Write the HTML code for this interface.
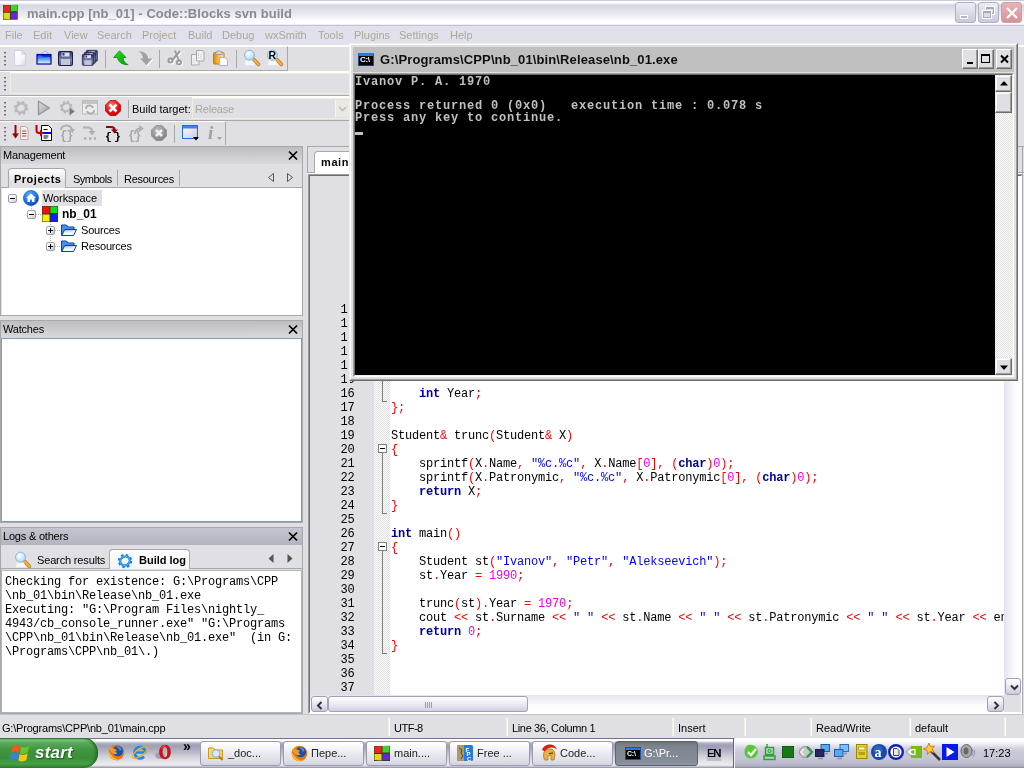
<!DOCTYPE html>
<html><head><meta charset="utf-8"><title>Code::Blocks</title>
<style>
html,body{margin:0;padding:0;background:#e0dfe3;}
body{width:1024px;height:768px;overflow:hidden;position:relative;font-family:"Liberation Sans",sans-serif;font-size:11px;color:#000;}
#app{will-change:transform;position:absolute;left:0;top:0;width:1024px;height:768px;overflow:hidden;background:#e0dfe3;}
.a{position:absolute;}
.t{position:absolute;white-space:pre;line-height:14px;height:14px;}
svg{position:absolute;overflow:visible;}
/* title bar */
#title{left:0;top:0;width:1024px;height:26px;background:linear-gradient(#c9c9d9 0,#c9c9d9 1px,#fff 1px,#fff 3px,#e6e6f0 4px,#d5d5e3 5px,#d7d7e5 6px,#e2e3ec 11px,#eeeff4 16px,#fbfbfc 20px,#fff 22px,#fff 24px,#eeeef5 24px,#eeeef5 25px,#c4c4d8 25px,#c4c4d8 26px);}
#menu{left:0;top:26px;width:1024px;height:19px;background:#e0e1eb;}
.mi{color:#aca899;top:28px;}
.tb{position:absolute;height:23px;background:#e0dfe3;border-top:1px solid #fff;border-bottom:1px solid #a8a7aa;}
.grip{position:absolute;left:4px;top:5px;width:3px;height:15px;background:repeating-linear-gradient(#6e6d74 0,#6e6d74 1px,#a9a8ae 1px,#a9a8ae 2px,#fff 2px,#fff 3px,transparent 3px,transparent 4px);clip-path:polygon(0 0,100% 0,100% 100%,0 100%)}.grip:after{content:"";position:absolute;left:2px;top:0;width:1px;height:15px;background:#e0dfe3}.grip:before{content:"";position:absolute;left:0;top:0;width:3px;height:15px;background:repeating-linear-gradient(transparent 0,transparent 2px,#e0dfe3 2px,#e0dfe3 4px)}
.sep{position:absolute;width:1px;background:#a8a7aa;}
/* aui panes */
.pane{position:absolute;border:1px solid #a8a7aa;background:#e0dfe3;box-sizing:border-box;}
.cap{position:absolute;left:0;top:0;right:0;height:17px;background:linear-gradient(#bebec1,#d9d8dc);}
.cap.act{background:linear-gradient(#c3c5cf,#b2b4bf);}
.cap .t{left:2px;top:1px;letter-spacing:-0.2px}
.mono{font-family:"Liberation Mono",monospace;}

.k{color:#0000a0;font-weight:bold}.o{color:#ff0000}.s{color:#0000ff}.n{color:#f000f0}
.ln{left:0;width:44.6px;text-align:right;}
.fl{width:1px;background:#808080}.fh{width:5px;height:1px;background:#808080}
.fb{width:9px;height:9px;box-sizing:border-box;border:1px solid #808080;background:#fff}
.fb:after{content:"";position:absolute;left:1px;top:3px;width:5px;height:1px;background:#000}
.sbb{width:17px;height:17px;box-sizing:border-box;border:1px solid #a0a0b8;border-radius:3px;background:linear-gradient(#fff,#e2e2ee 60%,#c8c8da);}

.ss{position:absolute;top:718px;width:1px;height:18px;background:#f1efe2;border-right:1px solid #fff}
.cbt{position:absolute;top:5px;width:16px;height:20px;box-sizing:border-box;background:#e0dfe3;border:1px solid;border-color:#fff #716f64 #716f64 #fff;box-shadow:inset -1px -1px 0 #9d9da1}
.csb{position:absolute;width:17px;height:17px;box-sizing:border-box;background:#e0dfe3;border:1px solid;border-color:#f1efe2 #716f64 #716f64 #f1efe2;box-shadow:inset -1px -1px 0 #9d9da1,inset 1px 1px 0 #fff}
.c{left:0;line-height:12px;height:12px}

.tk{position:absolute;top:741px;width:81px;height:25px;box-sizing:border-box;border:1px solid #9a9ab0;border-radius:3px;background:linear-gradient(#fff 0,#fcfcfe 3px,#e8e8f0 12px,#dcdce6 20px,#cfcfdc 24px);}
.tk .t{left:27px;top:4px;color:#222;font-size:11px}
.tk.on{background:linear-gradient(#6c727e 0,#7c8490 4px,#868e9a 20px,#949ca8 24px);border-color:#5c6270}
.tk.on .t{color:#fff;left:28px}

.xp{position:absolute;width:9px;height:9px;box-sizing:border-box;border:1px solid #9c9cac;border-radius:2px;background:linear-gradient(135deg,#fff 30%,#c8c8d4)}
.xp:before{content:"";position:absolute;left:1px;top:3px;width:5px;height:1px;background:#000}
.xp.pl:after{content:"";position:absolute;left:3px;top:1px;width:1px;height:5px;background:#000}
.dv{position:absolute;width:1px;background:repeating-linear-gradient(#b8b4a0 0,#b8b4a0 1px,transparent 1px,transparent 2px)}
.dh{position:absolute;height:1px;background:repeating-linear-gradient(90deg,#b8b4a0 0,#b8b4a0 1px,transparent 1px,transparent 2px)}

.wb{position:absolute;top:2px;width:21px;height:21px;box-sizing:border-box;border:1px solid #b0b0c4;border-radius:3px;background:linear-gradient(#ececf4,#dcdce8 50%,#c8c8d8);}
</style></head><body><div id="app">

<!-- ===== main window title ===== -->
<div id="title" class="a"></div>
<div class="t" id="ttl" style="left:27px;top:6px;font-size:13px;letter-spacing:0.05px;line-height:16px;height:16px;font-weight:bold;color:#8a8a8e;">main.cpp [nb_01] - Code::Blocks svn build</div>

<!-- ===== menu ===== -->
<div id="menu" class="a"></div>
<div class="t mi" style="left:5px">File</div>
<div class="t mi" style="left:33px">Edit</div>
<div class="t mi" style="left:64px">View</div>
<div class="t mi" style="left:97px">Search</div>
<div class="t mi" style="left:142px">Project</div>
<div class="t mi" style="left:188px">Build</div>
<div class="t mi" style="left:222px">Debug</div>
<div class="t mi" style="left:265px">wxSmith</div>
<div class="t mi" style="left:318px">Tools</div>
<div class="t mi" style="left:354px">Plugins</div>
<div class="t mi" style="left:399px">Settings</div>
<div class="t mi" style="left:450px">Help</div>

<!-- ===== toolbars ===== -->
<div class="a" style="left:0;top:45px;width:1024px;height:2px;background:#fff"></div>
<div class="tb" id="tb1" style="left:0;top:46px;width:287px;border-right:1px solid #a8a7aa"><div class="grip"></div></div>
<div class="tb" id="tb2" style="left:0;top:71px;width:1024px;"><div class="grip"></div></div>
<div class="tb" id="tb3" style="left:0;top:96px;width:1024px;"><div class="grip"></div></div>
<div class="tb" id="tb4" style="left:0;top:121px;width:225px;border-right:1px solid #a8a7aa"><div class="grip"></div></div>


<!-- ===== Management pane ===== -->
<div class="a" style="left:0;top:145px;width:304px;height:2px;background:#e0dfe3"></div>
<div class="pane" id="mgmt" style="left:0;top:146px;width:303px;height:170px;">
  <div class="cap"><div class="t">Management</div>
    <svg style="left:287px;top:4px" width="10" height="9" viewBox="0 0 10 9"><path d="M1 0.5L9 8.5M9 0.5L1 8.5" stroke="#000" stroke-width="1.7" fill="none"/></svg></div>
  <div class="a" style="left:0;top:17px;right:0;height:23px;background:#e0dfe3;border-bottom:1px solid #a8a7aa"></div>
  <div class="a" style="left:7px;top:21px;width:58px;height:20px;box-sizing:border-box;border:1px solid #a8a7aa;border-bottom:none;border-radius:4px 4px 0 0;background:linear-gradient(#fff,#e0dfe3 70%)"></div>
  <div class="t" style="left:13px;top:25px;font-weight:bold;letter-spacing:0.5px">Projects</div>
  <div class="t" style="left:72px;top:25px;letter-spacing:-0.5px">Symbols</div>
  <div class="sep" style="left:116px;top:23px;height:16px"></div>
  <div class="t" style="left:123px;top:25px;letter-spacing:-0.3px">Resources</div>
  <div class="sep" style="left:178px;top:23px;height:16px"></div>
  <svg style="left:267px;top:26px" width="26" height="10" viewBox="0 0 26 10"><path d="M5.5 0.5L0.5 4.5L5.5 8.5Z M19.5 0.5L24.5 4.5L19.5 8.5Z" stroke="#555" stroke-width="1" fill="none"/></svg>
  <div class="a" id="tree" style="left:1px;top:41px;width:300px;height:127px;background:#fff;"></div>
</div>

<!-- ===== Watches pane ===== -->
<div class="pane" id="watch" style="left:0;top:320px;width:303px;height:203px;">
  <div class="cap"><div class="t">Watches</div>
    <svg style="left:287px;top:4px" width="10" height="9" viewBox="0 0 10 9"><path d="M1 0.5L9 8.5M9 0.5L1 8.5" stroke="#000" stroke-width="1.7" fill="none"/></svg></div>
  <div class="a" style="left:0;top:17px;width:299px;height:182px;background:#fff;border:1px solid #7f9db9"></div>
</div>

<!-- ===== Logs pane ===== -->
<div class="pane" id="logs" style="left:0;top:527px;width:303px;height:187px;">
  <div class="cap act"><div class="t">Logs &amp; others</div>
    <svg style="left:287px;top:4px" width="10" height="9" viewBox="0 0 10 9"><path d="M1 0.5L9 8.5M9 0.5L1 8.5" stroke="#000" stroke-width="1.7" fill="none"/></svg></div>
  <div class="a" style="left:0;top:17px;right:0;height:23px;background:#e0dfe3;border-bottom:1px solid #a8a7aa"></div>
  <div class="t" style="left:36px;top:25px;letter-spacing:-0.15px">Search results</div>
  <div class="a" style="left:108px;top:21px;width:81px;height:20px;box-sizing:border-box;border:1px solid #a8a7aa;border-bottom:none;border-radius:4px 4px 0 0;background:linear-gradient(#fff,#f4f4f6)"></div>
  <div class="t" style="left:138px;top:25px;font-weight:bold;">Build log</div>
  <svg style="left:267px;top:26px" width="26" height="10" viewBox="0 0 26 10"><path d="M5.5 0L0.5 4.5L5.5 9Z M19.5 0L24.5 4.5L19.5 9Z" fill="#555"/></svg>
  <div class="a mono" id="logtxt" style="left:0px;top:42px;width:301px;height:143px;box-sizing:border-box;border:1px solid #a9b7c6;background:#fff;font-size:12px;letter-spacing:-0.2px;">
<div class="t" style="left:3px;top:4px">Checking for existence: G:\Programs\CPP</div>
<div class="t" style="left:3px;top:18px">\nb_01\bin\Release\nb_01.exe</div>
<div class="t" style="left:3px;top:32px">Executing: "G:\Program Files\nightly_</div>
<div class="t" style="left:3px;top:46px">4943/cb_console_runner.exe" "G:\Programs</div>
<div class="t" style="left:3px;top:60px">\CPP\nb_01\bin\Release\nb_01.exe"  (in G:</div>
<div class="t" style="left:3px;top:74px">\Programs\CPP\nb_01\.)</div>
  </div>
</div>

<svg width="0" height="0" style="left:0;top:0"><defs>
<linearGradient id="gpage" x1="0" y1="0" x2="1" y2="1"><stop offset="0" stop-color="#fff"/><stop offset=".6" stop-color="#f6f6fb"/><stop offset="1" stop-color="#d8d8ea"/></linearGradient>
<linearGradient id="gfold" x1="0" y1="0" x2="0" y2="1"><stop offset="0" stop-color="#1038c8"/><stop offset=".5" stop-color="#58a8f8"/><stop offset="1" stop-color="#fff"/></linearGradient>
<linearGradient id="gsave" x1="0" y1="0" x2="0" y2="1"><stop offset="0" stop-color="#2c3464"/><stop offset=".6" stop-color="#7c84a8"/><stop offset="1" stop-color="#50587c"/></linearGradient>
<linearGradient id="gclip" x1="0" y1="0" x2="1" y2="0"><stop offset="0" stop-color="#e08808"/><stop offset=".5" stop-color="#f8c040"/><stop offset="1" stop-color="#fff0a0"/></linearGradient>
<radialGradient id="glens" cx=".4" cy=".35" r=".7"><stop offset="0" stop-color="#fff"/><stop offset="1" stop-color="#a8d4f0"/></radialGradient>
<linearGradient id="ggray" x1="0" y1="0" x2="1" y2="1"><stop offset="0" stop-color="#e0e0e0"/><stop offset="1" stop-color="#9c9c9c"/></linearGradient>
<radialGradient id="gred" cx=".4" cy=".3" r=".8"><stop offset="0" stop-color="#ff7070"/><stop offset=".6" stop-color="#e81010"/><stop offset="1" stop-color="#b00000"/></radialGradient>
<radialGradient id="ggry2" cx=".4" cy=".3" r=".8"><stop offset="0" stop-color="#b8b8b8"/><stop offset="1" stop-color="#7c7c7c"/></radialGradient>
<linearGradient id="ggreen" x1="0" y1="0" x2="1" y2="1"><stop offset="0" stop-color="#30e030"/><stop offset="1" stop-color="#00a000"/></linearGradient>
<linearGradient id="gwin" x1="0" y1="0" x2="1" y2="1"><stop offset="0" stop-color="#fff"/><stop offset="1" stop-color="#c8c8e0"/></linearGradient>
<radialGradient id="gsph" cx=".4" cy=".3" r=".8"><stop offset="0" stop-color="#60b0ff"/><stop offset=".7" stop-color="#1060e0"/><stop offset="1" stop-color="#0838a0"/></radialGradient>
<g id="isave"><rect x=".5" y=".5" width="14" height="14" rx="1" fill="url(#gsave)" stroke="#181c48"/><rect x="3" y="8" width="9" height="6" fill="#c4c4da"/><rect x="3.5" y="1.5" width="8" height="4" fill="#dcdcec"/><rect x="4.5" y="2" width="2" height="2.5" fill="#30386c"/></g>
<g id="ifind"><path d="M1.500 10h8.500l1 5.500h-10.500z" fill="#f6f6fb" stroke="#dedeea" stroke-width=".6"/><path d="M10 9.500l4.500 5" stroke="#b87818" stroke-width="3.400" stroke-linecap="round"/><path d="M10 9.500l4.500 5" stroke="#f8b040" stroke-width="2" stroke-linecap="round"/><circle cx="5.500" cy="5.200" r="5" fill="url(#glens)" stroke="#88b8dc"/></g>
<g id="igear"><ellipse cx="8" cy="8" rx="4.900" ry="4.300" transform="rotate(-30 8 8)" fill="none" stroke-width="2.300"/><circle cx="8" cy="8" r="6.200" fill="none" stroke-width="1.900" stroke-dasharray="2.500 2.370"/></g>
<path id="ioct" d="M5 .5h6l4.5 4.5v6l-4.5 4.5h-6l-4.5-4.5v-6z"/>
<g id="ifold"><path d="M.5 11.500v-10.500h5l1.500 2h6v3" fill="#4890f0" stroke="#1038c0"/><path d="M.7 11.500l3-6h11.800l-3 6z" fill="url(#gfold2)" stroke="#1038c0"/></g>
<linearGradient id="gfold2" x1="0" y1="0" x2=".3" y2="1"><stop offset="0" stop-color="#78b8ff"/><stop offset=".55" stop-color="#e8f2ff"/><stop offset="1" stop-color="#fff"/></linearGradient>

<g id="iff"><circle cx="8.500" cy="8.500" r="7.800" fill="#e87810"/><path d="M.8 7q-.5 5 3.500 8 4 2.500 8.500.8-4.500 0-7.500-2.500-3-3-4.500-6.300z" fill="#f8b830"/><circle cx="9.800" cy="7" r="5.300" fill="#1c50b0"/><path d="M8 2.500q3-1 5 1.500 1 2-1 3-1-2.500-4-4.500z" fill="#58a0e8" opacity=".8"/><path d="M1.200 4q2.300-1.200 4.300.3l3.500 1.700-1.700 1.500 2.200 2.300q-3.500 1.200-5.700-1-2-2.300-2.600-4.800z" fill="#f89820"/></g>
<g id="icb"><rect x="0" y="1" width="16" height="15" fill="#403828"/><path d="M.5 1.500l7-.5v7h-7z" fill="#e82818"/><path d="M8.500 1l7-.5v7h-7z" fill="#40d030"/><path d="M.5 9h7v6.500l-7-.5z" fill="#e0d818"/><path d="M8.500 9h7v6l-7 .5z" fill="#6028d8"/></g>
<g id="icmd"><rect x=".5" y=".5" width="15" height="12" fill="#000" stroke="#1c4fa8"/><rect x="1" y="1" width="14" height="2" fill="#2a7be0"/></g>
</defs></svg>

<!-- toolbar 1 icons -->
<svg style="left:12px;top:50px" width="16" height="16"><path d="M2.5 .5h7.5l3.5 3.5v11.5h-11z" fill="url(#gpage)" stroke="#d0d0e0"/><path d="M10 .5v3.5h3.5z" fill="#ececf6" stroke="#c0c0d4" stroke-width=".8"/></svg>
<svg style="left:36px;top:50px" width="16" height="16"><path d="M5 4l4-3 2.5 1.5 1 2" fill="#e8f0ff" stroke="#78a0e8" stroke-width=".8"/><rect x="1" y="4.5" width="14" height="9.5" fill="url(#gfold)" stroke="#0000b0" stroke-width="1.2"/><path d="M1 4.5h5l1 1.5h8" fill="none" stroke="#0000b0" stroke-width="1.2"/></svg>
<svg style="left:58px;top:51px" width="16" height="16"><use href="#isave"/></svg>
<svg style="left:82px;top:50px" width="18" height="17"><g transform="translate(4,0) scale(.78)"><use href="#isave"/></g><g transform="translate(2,2) scale(.78)"><use href="#isave"/></g><g transform="translate(0,4) scale(.78)"><use href="#isave"/></g></svg>
<div class="sep" style="left:105px;top:50px;height:18px"></div>
<svg style="left:113px;top:50px" width="16" height="16"><path d="M6.5 .8L.6 7.5h4c.3 4 4 7.2 10.6 7.2-3.200-1.200-5-3.500-5.200-7.200h3z" fill="url(#ggreen)" stroke="#009000" stroke-width=".8"/></svg>
<svg style="left:137px;top:50px" width="17" height="17"><g transform="translate(1,1) rotate(180 8 8)"><path d="M6.500 .8L.6 7.500h4c.3 4 4 7.200 10.600 7.200-3.200-1.200-5-3.500-5.200-7.200h3z" fill="#fff"/></g><g transform="rotate(180 8 8)"><path d="M6.500 .8L.6 7.500h4c.3 4 4 7.200 10.600 7.200-3.200-1.200-5-3.500-5.200-7.200h3z" fill="#a2a2a2"/></g></svg>
<div class="sep" style="left:159px;top:50px;height:18px"></div>
<svg style="left:167px;top:50px" width="17" height="17"><g transform="translate(1,1)" stroke="#fff" stroke-width="2" fill="none"><path d="M13 1L5.500 10M8 .5l4 10.500"/><circle cx="3.500" cy="10.500" r="2"/><circle cx="12" cy="12.500" r="2"/></g><g stroke="#9c9c9c" stroke-width="2" fill="none"><path d="M13 1L5.500 10M8 .5l4 10.500"/><circle cx="3.500" cy="10.500" r="2"/><circle cx="12" cy="12.500" r="2"/></g></svg>
<svg style="left:191px;top:50px" width="16" height="16"><path d="M.5 4.500h6l1.500 1.500v9h-7.500z" fill="#f0f0f0" stroke="#a8a8a8"/><path d="M5.500 .5h6l1.500 1.500v9h-7.500z" fill="#f0f0f0" stroke="#a8a8a8"/><path d="M7.500 3v6M10 4v5M3 8v5" stroke="#c4c4c4" stroke-dasharray="1 1"/></svg>
<svg style="left:213px;top:50px" width="16" height="16"><rect x=".5" y="2.500" width="10.500" height="11.500" rx="1" fill="url(#gclip)" stroke="#c87808"/><path d="M2.500 4.500a3.500 3.800 0 0 1 7 0z" fill="#d4d4dc" stroke="#9090a0" stroke-width=".8"/><path d="M6.500 7.500h5.500l2.500 2.500v5.500h-8z" fill="#fafaff" stroke="#b0b0cc"/></svg>
<div class="sep" style="left:236px;top:50px;height:18px"></div>
<svg style="left:244px;top:50px" width="16" height="16"><use href="#ifind"/></svg>
<svg style="left:267px;top:50px" width="16" height="16"><use href="#ifind"/><text x="1.500" y="9" font-family="Liberation Sans,sans-serif" font-size="10.500" font-weight="bold" fill="#000">R</text></svg>

<!-- toolbar 2 field -->
<div class="a" style="left:10px;top:73px;width:340px;height:21px;box-sizing:border-box;border:1px solid #efedde;border-right:none;box-shadow:0 -1px 0 #fff"></div>
<!-- toolbar 3 icons -->
<svg style="left:13px;top:100px" width="16" height="16"><g stroke="#b8b8b8"><use href="#igear"/></g></svg>
<svg style="left:37px;top:100px" width="16" height="16"><path d="M1.500 1.200L12.500 8L1.500 14.800z" fill="url(#ggray)" stroke="#949494" stroke-width="1.300" stroke-linejoin="round"/></svg>
<svg style="left:59px;top:100px" width="17" height="16"><g stroke="#b8b8b8" transform="scale(.9)"><use href="#igear"/></g><path d="M10.200 6.800l6 4.700-6 4.500z" fill="#787878" stroke="#e0dfe3" stroke-width=".7"/></svg>
<svg style="left:82px;top:100px" width="16" height="16"><rect x=".5" y=".5" width="15" height="13.500" fill="#ececec" stroke="#bcbcbc"/><rect x="1" y="1" width="14" height="3" fill="#c4c4c4"/><path d="M4 9a3.500 3 0 0 1 7-1M12 10a3.500 3 0 0 1-7 1" fill="none" stroke="#b0b0b0" stroke-width="2"/></svg>
<svg style="left:105px;top:100px" width="16" height="16"><use href="#ioct" fill="url(#gred)" stroke="#c80000" stroke-width=".8"/><path d="M4.500 4.500l7 7M11.500 4.500l-7 7" stroke="#fff" stroke-width="2.600"/></svg>
<div class="sep" style="left:128px;top:100px;height:18px"></div>
<div class="t" style="left:132px;top:102px">Build target:</div>
<div class="a" style="left:192px;top:98px;width:158px;height:21px;box-sizing:border-box;border:1px solid #efedde;border-right:none;box-shadow:0 -1px 0 #fff"></div>
<div class="t" style="left:195px;top:102px;color:#aca899;letter-spacing:-0.2px">Release</div>
<div class="a" style="left:335px;top:100px;width:15px;height:17px;background:#eae9e4;border-left:1px solid #f6f5ee"></div>
<svg style="left:338px;top:106px" width="9" height="6"><path d="M1 1l3.500 3.500L8 1" stroke="#c0bdb0" stroke-width="1.600" fill="none"/></svg>
<!-- toolbar 4 icons -->
<svg style="left:12px;top:125px" width="17" height="16"><path d="M3.500 0v11" stroke="#a00000" stroke-width="2"/><path d="M0 8.500l3.500 5 3.500-5z" fill="#a00000"/><path d="M8.500 1.500h5l2.500 2.500v10.500h-7.500z" fill="#f4f4f4" stroke="#c8a0a0"/><path d="M10 6h4.500M10 8.500h4.500M10 11h4.500" stroke="#e03030"/></svg>
<svg style="left:35px;top:125px" width="18" height="16"><path d="M6.500 .5h7l3 3v12h-10z" fill="#fff" stroke="#000"/><path d="M8.500 4.500h4M8.500 11h5M8.500 13h4" stroke="#000"/><path d="M8 8h9" stroke="#0000e0" stroke-width="2"/><path d="M1.500 0v5.500q0 2.500 3 2.500h2" fill="none" stroke="#c00000" stroke-width="2"/><path d="M5 4.500l3.500 3.500-3.500 3.500z" fill="#c00000"/></svg>
<svg style="left:59px;top:125px" width="17" height="16"><text x="1" y="14" font-family="Liberation Mono,monospace" font-size="12" font-weight="bold" fill="#a8a8a8" letter-spacing="-1">{}</text><path d="M2 5a5.500 4.500 0 0 1 11 0" fill="none" stroke="#b0b0b0" stroke-width="2"/><path d="M10.500 4h5.500l-2.500 4z" fill="#b0b0b0"/></svg>
<svg style="left:82px;top:125px" width="16" height="16"><path d="M1 2.500h5q4 0 4 4" fill="none" stroke="#b0b0b0" stroke-width="2"/><path d="M6.500 6h7l-3.500 4.500z" fill="#b0b0b0"/><path d="M2 13.500h12" stroke="#b0b0b0" stroke-width="2.500" stroke-dasharray="2.500 2.500"/></svg>
<svg style="left:105px;top:125px" width="17" height="16"><text x="0" y="14.500" font-family="Liberation Mono,monospace" font-size="11.500" font-weight="bold" fill="#000" letter-spacing="2">{}</text><path d="M1 2h5q3.500 0 3.500 3" fill="none" stroke="#900010" stroke-width="2.200"/><path d="M6 4.500h7l-3.500 4z" fill="#900010"/></svg>
<svg style="left:128px;top:125px" width="17" height="16"><text x="0" y="14" font-family="Liberation Mono,monospace" font-size="12" font-weight="bold" fill="#a8a8a8" letter-spacing="-1">{}</text><path d="M7 9q0-5 5-5.500" fill="none" stroke="#b0b0b0" stroke-width="2"/><path d="M11 0l5 3.500-5 3.500z" fill="#b0b0b0"/></svg>
<svg style="left:151px;top:125px" width="16" height="16"><use href="#ioct" fill="url(#ggry2)" stroke="#8c8c8c" stroke-width=".8"/><path d="M5 5l6 6M11 5l-6 6" stroke="#f0f0f0" stroke-width="2.600"/></svg>
<div class="sep" style="left:174px;top:125px;height:18px"></div>
<svg style="left:182px;top:125px" width="17" height="16"><rect x=".5" y=".5" width="15" height="13" fill="url(#gwin)" stroke="#2868e8"/><rect x="1" y="1" width="14" height="2.500" fill="#4080f0"/><path d="M11 12h6l-3 3.500z" fill="#000"/></svg>
<svg style="left:206px;top:125px" width="18" height="16"><text x="2" y="14" font-family="Liberation Serif,serif" font-size="19" font-weight="bold" font-style="italic" fill="#a0a0a0">i</text><path d="M11 12h5l-2.500 3z" fill="#a0a0a0"/></svg>

<!-- tree (abs coords) -->
<div class="a" style="left:42px;top:190px;width:60px;height:16px;background:#e0dfe3"></div>
<div class="dv" style="left:31px;top:206px;height:4px"></div>
<div class="dh" style="left:36px;top:214px;width:6px"></div><div class="dv" style="left:50px;top:222px;height:24px"></div>
<div class="dh" style="left:55px;top:230px;width:6px"></div><div class="dh" style="left:55px;top:246px;width:6px"></div>
<div class="xp" style="left:8px;top:194px"></div>
<div class="xp" style="left:27px;top:210px"></div>
<div class="xp pl" style="left:46px;top:226px"></div>
<div class="xp pl" style="left:46px;top:242px"></div>
<svg style="left:23px;top:190px" width="16" height="16"><circle cx="8" cy="8" r="7.600" fill="url(#gsph)" stroke="#0a48c0" stroke-width=".6"/><path d="M8 3.500L3 8h1.500v4h2.500v-2.500h2v2.500h2.500v-4H13z" fill="#fff"/></svg>
<svg style="left:42px;top:206px" width="16" height="16"><rect x="0" y="0" width="16" height="16" fill="#403020"/><rect x=".5" y=".5" width="7" height="7" fill="#f01010"/><rect x="8.500" y=".5" width="7" height="6.500" fill="#10e010"/><rect x=".5" y="8.500" width="7" height="7" fill="#f0f010"/><rect x="8.500" y="8" width="7" height="7.500" fill="#1020f0"/></svg>
<svg style="left:61px;top:224px" width="16" height="13"><use href="#ifold"/></svg>
<svg style="left:61px;top:240px" width="16" height="13"><use href="#ifold"/></svg>
<div class="t" style="left:43px;top:191px;letter-spacing:-0.100px">Workspace</div>
<div class="t" style="left:62px;top:207px;font-weight:bold;font-size:12px">nb_01</div>
<div class="t" style="left:81px;top:223px;letter-spacing:-0.200px">Sources</div>
<div class="t" style="left:81px;top:239px;letter-spacing:-0.200px">Resources</div>

<!-- title icon & buttons -->
<svg style="left:3px;top:4px" width="15" height="16"><g transform="scale(.92,.98)"><use href="#icb"/></g></svg>
<div class="wb" style="left:955px"><div class="a" style="left:4px;top:12px;width:8px;height:3px;background:#b8b8c8;border:1px solid #fff;box-sizing:border-box;height:4px"></div></div>
<div class="wb" style="left:978px"><div class="a" style="left:7px;top:4px;width:8px;height:7px;box-sizing:border-box;border:1px solid #a8a8bc;border-top-width:2px;box-shadow:0 0 0 1px #fff"></div><div class="a" style="left:4px;top:8px;width:8px;height:7px;box-sizing:border-box;border:1px solid #a8a8bc;border-top-width:2px;background:#dcdce8;box-shadow:0 0 0 1px #fff"></div></div>
<div class="wb" style="left:1001px;background:linear-gradient(#e8b4b4,#dca0a4 60%,#d49498);border-color:#d0a0a8"><svg style="left:4px;top:4px" width="12" height="12"><path d="M1 1l10 10M11 1L1 11" stroke="#fff" stroke-width="2.200"/></svg></div>
<!-- log tab icons -->
<svg style="left:15px;top:552px" width="16" height="16"><use href="#ifind"/></svg>
<svg style="left:117px;top:553px" width="16" height="16"><g stroke="#1080f0"><use href="#igear"/></g><ellipse cx="8" cy="8" rx="4.900" ry="4.300" transform="rotate(-30 8 8)" fill="none" stroke="#48a8ff" stroke-width="1.200"/></svg>
<!-- right strip next to console -->
<div class="a" style="left:1018px;top:47px;width:6px;height:99px;background:#e0dfe3"></div>
<!--PANES-->

<!-- ===== editor notebook ===== -->
<div class="a" style="left:307px;top:146px;width:717px;height:28px;background:#e0dfe3;border-top:1px solid #a8a7aa;border-left:1px solid #a8a7aa;box-sizing:border-box"></div>
<div class="a" style="left:307px;top:172px;width:717px;height:2px;background:#fff;border-top:1px solid #a8a7aa;box-sizing:content-box;height:1px"></div>
<div class="a" style="left:314px;top:151px;width:60px;height:22px;box-sizing:border-box;border:1px solid #a8a7aa;border-bottom:none;border-radius:4px 4px 0 0;background:#fff"></div>
<div class="t" style="left:321px;top:155px;font-weight:bold;letter-spacing:0.6px">main.cpp</div>
<div class="a" style="left:1022px;top:146px;width:1px;height:568px;background:#a8a7aa"></div><div class="a" id="edit" style="left:308px;top:174px;width:715px;height:540px;box-sizing:border-box;border:1px solid;border-color:#9d9da1 transparent #fff #9d9da1;background:#fff;background-clip:padding-box">
 <div class="a" style="left:0;top:0;width:713px;height:538px;box-sizing:border-box;border:1px solid;border-color:#716f64 #fff #fff #716f64;"></div>
 <div class="a" id="ec" style="left:1px;top:1px;width:711px;height:536px;overflow:hidden;">
  <div class="a" style="left:0;top:0;width:64px;height:519px;background:#e0dfe3"></div>
  <div class="a" style="left:64px;top:0;width:16px;height:519px;background:#efeff1;background-image:conic-gradient(#fff 25%,#e0dfe3 0 50%,#fff 0 75%,#e0dfe3 0);background-size:2px 2px"></div>
  <div class="a mono" id="code" style="left:0;top:0;width:694px;height:519px;font-size:12px;letter-spacing:-0.2px;overflow:hidden">
<div class="t ln" style="top:127px">10</div>
<div class="t ln" style="top:141px">11</div>
<div class="t ln" style="top:155px">12</div>
<div class="t ln" style="top:169px">13</div>
<div class="t ln" style="top:183px">14</div>
<div class="t ln" style="top:197px">15</div>
<div class="t ln" style="top:211px">16</div><div class="t" style="left:81px;top:211px">    <span class="k">int</span> Year<span class="o">;</span></div>
<div class="t ln" style="top:225px">17</div><div class="t" style="left:81px;top:225px"><span class="o">};</span></div>
<div class="t ln" style="top:239px">18</div>
<div class="t ln" style="top:253px">19</div><div class="t" style="left:81px;top:253px">Student<span class="o">&amp;</span> trunc<span class="o">(</span>Student<span class="o">&amp;</span> X<span class="o">)</span></div>
<div class="t ln" style="top:267px">20</div><div class="t" style="left:81px;top:267px"><span class="o">{</span></div>
<div class="t ln" style="top:281px">21</div><div class="t" style="left:81px;top:281px">    sprintf<span class="o">(</span>X<span class="o">.</span>Name<span class="o">,</span> <span class="s">"%c.%c"</span><span class="o">,</span> X<span class="o">.</span>Name<span class="o">[</span><span class="n">0</span><span class="o">],</span> <span class="o">(</span><span class="k">char</span><span class="o">)</span><span class="n">0</span><span class="o">);</span></div>
<div class="t ln" style="top:295px">22</div><div class="t" style="left:81px;top:295px">    sprintf<span class="o">(</span>X<span class="o">.</span>Patronymic<span class="o">,</span> <span class="s">"%c.%c"</span><span class="o">,</span> X<span class="o">.</span>Patronymic<span class="o">[</span><span class="n">0</span><span class="o">],</span> <span class="o">(</span><span class="k">char</span><span class="o">)</span><span class="n">0</span><span class="o">);</span></div>
<div class="t ln" style="top:309px">23</div><div class="t" style="left:81px;top:309px">    <span class="k">return</span> X<span class="o">;</span></div>
<div class="t ln" style="top:323px">24</div><div class="t" style="left:81px;top:323px"><span class="o">}</span></div>
<div class="t ln" style="top:337px">25</div>
<div class="t ln" style="top:351px">26</div><div class="t" style="left:81px;top:351px"><span class="k">int</span> main<span class="o">()</span></div>
<div class="t ln" style="top:365px">27</div><div class="t" style="left:81px;top:365px"><span class="o">{</span></div>
<div class="t ln" style="top:379px">28</div><div class="t" style="left:81px;top:379px">    Student st<span class="o">(</span><span class="s">"Ivanov"</span><span class="o">,</span> <span class="s">"Petr"</span><span class="o">,</span> <span class="s">"Alekseevich"</span><span class="o">);</span></div>
<div class="t ln" style="top:393px">29</div><div class="t" style="left:81px;top:393px">    st<span class="o">.</span>Year <span class="o">=</span> <span class="n">1990</span><span class="o">;</span></div>
<div class="t ln" style="top:407px">30</div>
<div class="t ln" style="top:421px">31</div><div class="t" style="left:81px;top:421px">    trunc<span class="o">(</span>st<span class="o">).</span>Year <span class="o">=</span> <span class="n">1970</span><span class="o">;</span></div>
<div class="t ln" style="top:435px">32</div><div class="t" style="left:81px;top:435px">    cout <span class="o">&lt;&lt;</span> st<span class="o">.</span>Surname <span class="o">&lt;&lt;</span> <span class="s">" "</span> <span class="o">&lt;&lt;</span> st<span class="o">.</span>Name <span class="o">&lt;&lt;</span> <span class="s">" "</span> <span class="o">&lt;&lt;</span> st<span class="o">.</span>Patronymic <span class="o">&lt;&lt;</span> <span class="s">" "</span> <span class="o">&lt;&lt;</span> st<span class="o">.</span>Year <span class="o">&lt;&lt;</span> endl<span class="o">;</span></div>
<div class="t ln" style="top:449px">33</div><div class="t" style="left:81px;top:449px">    <span class="k">return</span> <span class="n">0</span><span class="o">;</span></div>
<div class="t ln" style="top:463px">34</div><div class="t" style="left:81px;top:463px"><span class="o">}</span></div>
<div class="t ln" style="top:477px">35</div>
<div class="t ln" style="top:491px">36</div>
<div class="t ln" style="top:505px">37</div>
  </div>
  <!-- fold marks -->
  <div class="a fl" style="left:72px;top:196px;height:29px"></div><div class="a fh" style="left:72px;top:225px"></div>
  <div class="a fb" style="left:68px;top:268px"></div><div class="a fl" style="left:72px;top:277px;height:60px"></div><div class="a fh" style="left:72px;top:337px"></div>
  <div class="a fb" style="left:68px;top:366px"></div><div class="a fl" style="left:72px;top:375px;height:102px"></div><div class="a fh" style="left:72px;top:477px"></div>
  <!-- v scrollbar -->
  <div class="a" style="left:694px;top:0;width:17px;height:519px;background:linear-gradient(90deg,#e4e4ee,#fbfbfd 60%,#fff)"></div>
  <div class="a sbb" style="left:695px;top:502px;width:16px"><svg style="left:4px;top:5px" width="9" height="7" viewBox="0 0 9 7"><path d="M1 1.5L4.5 5L8 1.5" stroke="#333" stroke-width="2" fill="none"/></svg></div>
  <!-- h scrollbar -->
  <div class="a" style="left:0;top:519px;width:694px;height:17px;background:linear-gradient(#e4e4ee,#fbfbfd 60%,#fff)"></div>
  <div class="a sbb" style="left:1px;top:520px;height:16px"><svg style="left:4px;top:4px" width="7" height="9" viewBox="0 0 7 9"><path d="M5.5 1L2 4.5L5.5 8" stroke="#333" stroke-width="2" fill="none"/></svg></div>
  <div class="a sbb" style="left:677px;top:520px;height:16px"><svg style="left:5px;top:4px" width="7" height="9" viewBox="0 0 7 9"><path d="M1.5 1L5 4.5L1.5 8" stroke="#333" stroke-width="2" fill="none"/></svg></div>
  <div class="a sbb" style="left:18px;top:520px;height:16px;width:200px;background:linear-gradient(#fff,#e6e6f0 60%,#d0d0e0)"><div class="a" style="left:96px;top:5px;width:8px;height:6px;background:repeating-linear-gradient(90deg,#9a9ab0 0,#9a9ab0 1px,transparent 1px,transparent 2px)"></div></div>
  <div class="a" style="left:694px;top:519px;width:17px;height:17px;background:#e0dfe3"></div>
 </div>
</div>
<!--EDITOR-->

<!-- ===== status bar ===== -->
<div class="a" id="status" style="left:0;top:714px;width:1024px;height:24px;background:#e0dfe3;border-top:1px solid #c4c3c8;box-sizing:border-box"></div>
<div class="t" style="left:2px;top:721px;letter-spacing:-0.2px">G:\Programs\CPP\nb_01\main.cpp</div>
<div class="t" style="left:394px;top:721px;letter-spacing:-0.5px">UTF-8</div>
<div class="t" style="left:512px;top:721px;letter-spacing:-0.35px">Line 36, Column 1</div>
<div class="t" style="left:678px;top:721px">Insert</div>
<div class="t" style="left:816px;top:721px">Read/Write</div>
<div class="t" style="left:915px;top:721px">default</div>
<div class="ss" style="left:388px"></div><div class="ss" style="left:506px"></div><div class="ss" style="left:672px"></div><div class="ss" style="left:744px"></div><div class="ss" style="left:810px"></div><div class="ss" style="left:909px"></div><div class="ss" style="left:1004px"></div>
<!--STATUS-->

<div class="a" style="left:348px;top:300px;width:2px;height:84px;background:#e0dfe3"></div>
<!-- ===== console window ===== -->
<div class="a" id="con" style="left:349px;top:43px;width:669px;height:338px;box-sizing:border-box;background:#e0dfe3;border:1px solid;border-color:#f1efe2 #716f64 #716f64 #f1efe2;">
 <div class="a" style="left:0;top:0;width:667px;height:336px;box-sizing:border-box;border:1px solid;border-color:#fff #9d9da1 #9d9da1 #fff;"></div>
 <div class="a" id="ccap" style="left:3px;top:3px;width:661px;height:25px;background:#c0c0c0"></div>
 <!-- icon -->
 <div class="a" style="left:8px;top:9px;width:16px;height:13px;background:#000;box-sizing:border-box;border:1px solid #1c4fa8;border-top:3px solid #2a7be0;border-bottom-color:#163a80"></div>
 <div class="t" style="left:10px;top:10px;font-size:8px;line-height:11px;height:11px;font-weight:bold;color:#fff;letter-spacing:-0.3px">C:\</div>
 <div class="t" id="ctitle" style="left:30px;top:8px;font-size:13px;letter-spacing:0.12px;line-height:16px;height:16px;font-weight:bold;color:#0e1010">G:\Programs\CPP\nb_01\bin\Release\nb_01.exe</div>
 <!-- caption buttons -->
 <div class="cbt" style="left:612px"><div class="a" style="left:4px;top:12px;width:6px;height:2px;background:#000"></div></div>
 <div class="cbt" style="left:628px"><div class="a" style="left:2px;top:4px;width:9px;height:9px;box-sizing:border-box;border:1px solid #000;border-top-width:2px"></div></div>
 <div class="cbt" style="left:646px"><svg style="left:3px;top:5px" width="9" height="8" viewBox="0 0 9 8"><path d="M1 0.5L8 7.5M8 0.5L1 7.5" stroke="#000" stroke-width="2" fill="none"/></svg></div>
 <!-- client -->
 <div class="a" style="left:3px;top:29px;width:661px;height:304px;box-sizing:border-box;border:1px solid;border-color:#9d9da1 #fff #fff #9d9da1;">
  <div class="a" style="left:0;top:0;width:659px;height:302px;box-sizing:border-box;border:1px solid;border-color:#716f64 #f1efe2 #f1efe2 #716f64;"></div>
  <div class="a mono" id="cblk" style="left:1px;top:1px;width:640px;height:300px;background:#000;color:#c0c0c0;font-size:12px;font-weight:bold;letter-spacing:0.8px;overflow:hidden">
<div class="t c" style="top:1px">Ivanov P. A. 1970</div>
<div class="t c" style="top:25px">Process returned 0 (0x0)   execution time : 0.078 s</div>
<div class="t c" style="top:37px">Press any key to continue.</div>
<div class="a" style="left:0;top:57px;width:8px;height:3px;background:#c0c0c0"></div>
  </div>
  <div class="a" style="left:641px;top:1px;width:17px;height:300px;background-image:conic-gradient(#fff 25%,#e0dfe3 0 50%,#fff 0 75%,#e0dfe3 0);background-size:2px 2px"></div>
  <div class="csb" style="left:641px;top:1px"><svg style="left:4px;top:5px" width="8" height="5" viewBox="0 0 8 5"><path d="M0 4.5L3.5 0.5L4.5 0.5L8 4.5Z" fill="#000"/></svg></div>
  <div class="csb" style="left:641px;top:18px;height:21px"></div>
  <div class="csb" style="left:641px;top:284px"><svg style="left:4px;top:6px" width="8" height="5" viewBox="0 0 8 5"><path d="M0 0.5L3.5 4.5L4.5 4.5L8 0.5Z" fill="#000"/></svg></div>
 </div>
</div>
<!--CONSOLE-->

<!-- ===== taskbar ===== -->
<div class="a" id="task" style="left:0;top:738px;width:1024px;height:30px;background:linear-gradient(#72728e 0,#72728e 1px,#fff 1px,#fff 3px,#d4d4e2 4px,#b4b4ca 5px,#a0a0b8 7px,#a2a2b8 9px,#b4b4c4 13px,#cecfd6 18px,#e2e2e6 23px,#eeeeee 27px,#c4c4d0 28.500px,#8c8ca8 30px)"></div>
<div class="a" id="start" style="left:0;top:738px;width:98px;height:30px;border-radius:0 14px 14px 0/0 15px 15px 0;background:linear-gradient(#3c8c3c 0,#7cc47c 2px,#58a858 5px,#3f963f 12px,#3a903a 20px,#46a046 26px,#2c7a2c 30px);box-shadow:inset -3px 0 3px -1px #1f6a1f,inset 0 1px 0 #2f7f2f"></div>
<div class="t" style="left:35px;top:742px;font-size:17px;line-height:22px;height:22px;font-weight:bold;font-style:italic;color:#fff;text-shadow:1px 1px 1px #1c5c1c;letter-spacing:0.2px">start</div>
<div class="t" style="left:183px;top:739px;font-size:14px;font-weight:bold;color:#000">&raquo;</div>
<div class="tk" style="left:200px"><div class="t">_doc...</div></div>
<div class="tk" style="left:283px"><div class="t">Пере...</div></div>
<div class="tk" style="left:366px"><div class="t">main....</div></div>
<div class="tk" style="left:449px"><div class="t">Free ...</div></div>
<div class="tk" style="left:532px"><div class="t">Code...</div></div>
<div class="tk on" style="left:615px;width:83px"><div class="t">G:\Pr...</div></div>
<div class="a" style="left:707px;top:745px;width:14px;height:16px;background:rgba(150,156,190,.45)"></div>
<div class="t" style="left:707px;top:746px;color:#000;letter-spacing:-1.1px;text-shadow:0.3px 0 0 #000">EN</div>
<div class="a" id="tray" style="left:733px;top:738px;width:291px;height:30px;background:linear-gradient(#fff 0,#fff 3px,#eeeef4 6px,#d4d4e0 10px,#c8c8d8 14px,#c6c6d6 20px,#bcbccc 25px,#b0b0c4 28px,#8888a4 30px);box-shadow:inset 1px 0 0 #62627e,inset 2px 0 0 #f4f4f8"></div>
<div class="t" style="left:983px;top:746px;color:#000">17:23</div>

<!-- start flag -->
<svg style="left:11px;top:744px" width="19" height="18"><path d="M1.500 2.500q3.500-2.500 7.500-.5l-1.200 6.500q-4-2-7.500.5z" fill="#f05820"/><path d="M10 2.500q4 2 8-.5l-1.200 6.500q-4 2.500-8 .5z" fill="#70c030"/><path d="M.2 10q3.500-2.500 7.500-.5l-1.200 6.500q-4-2-7.500.5z" fill="#3880e8"/><path d="M8.600 10q4 2 8-.5l-1.200 6.500q-4 2.500-8 .5z" fill="#f8c818"/></svg>
<!-- quick launch -->
<svg style="left:108px;top:744px" width="17" height="17"><use href="#iff"/></svg>
<svg style="left:132px;top:744px" width="17" height="17"><path d="M13.500 8.500a5.500 5.500 0 1 0-1.500 4" fill="none" stroke="#2088e8" stroke-width="3"/><path d="M3.500 8.500h10" stroke="#2088e8" stroke-width="2.500"/><ellipse cx="8" cy="8.500" rx="9" ry="3.500" transform="rotate(-35 8 8.500)" fill="none" stroke="#f0b020" stroke-width="1.300"/></svg>
<svg style="left:155px;top:744px" width="17" height="17"><ellipse cx="5" cy="11.500" rx="5" ry="3.500" fill="#9090a0" opacity=".7"/><path d="M10 .8c-3.800 0-5.800 3.300-5.800 7.200s2 7.200 5.800 7.200 5.800-3.300 5.800-7.200-2-7.200-5.800-7.200zm0 2c1.600 0 2.400 2.300 2.400 5.200s-.8 5.200-2.400 5.200-2.400-2.300-2.400-5.200.8-5.200 2.400-5.200z" fill="#c81414" fill-rule="evenodd"/><path d="M6 4.500q1.500-2.500 4-2.800" stroke="#f07060" stroke-width="1" fill="none"/></svg>
<!-- task icons -->
<svg style="left:208px;top:745px" width="17" height="17"><path d="M.5 13.500v-10.500h5l1.500 2h7.500v8.500z" fill="#f8d868" stroke="#c89820"/><circle cx="8" cy="8.500" r="3.800" fill="#d8ecff" stroke="#88a8d0"/><path d="M11 11.500l3.500 3.500" stroke="#b87818" stroke-width="2"/></svg>
<svg style="left:291px;top:745px" width="17" height="17"><use href="#iff"/></svg>
<svg style="left:374px;top:745px" width="16" height="16"><use href="#icb"/></svg>
<svg style="left:457px;top:745px" width="16" height="16"><rect x="0" y="0" width="16" height="16" rx="1.500" fill="#2878e8"/><path d="M0 1.500q0-1.500 1.500-1.500h5.500v16h-5.500q-1.500 0-1.500-1.500z" fill="#b09868"/><path d="M2 3l3 2-1 3 2 3-2 3" stroke="#604820" fill="none"/><text x="8.500" y="6.500" font-family="Liberation Sans,sans-serif" font-size="6" font-weight="bold" fill="#fff">F</text><text x="9.500" y="11" font-family="Liberation Sans,sans-serif" font-size="6" font-weight="bold" fill="#fff">P</text><text x="10" y="15.500" font-family="Liberation Sans,sans-serif" font-size="6" font-weight="bold" fill="#fff">C</text></svg>
<svg style="left:540px;top:744px" width="18" height="18"><path d="M2 6q2-6 9-5.500 4 .5 6 5-3-2.500-6-2-4 .5-6 4z" fill="#d02018"/><path d="M4 8q3-4.500 8-3 3 1.500 3 6l-1 5h-3v-5l-3 1v4h-3.500q-2-4-.5-8z" fill="#e8b040" stroke="#a87010" stroke-width=".7"/><path d="M9 9.500l4-.5" stroke="#503008" stroke-width="1.200"/></svg>
<svg style="left:625px;top:747px" width="16" height="13"><use href="#icmd"/></svg>
<div class="t" style="left:627px;top:749px;font-size:7px;line-height:9px;height:9px;font-weight:bold;color:#fff;letter-spacing:-0.200px">C:\</div>
<!-- tray icons -->
<svg style="left:744px;top:744px" width="16" height="16"><path d="M3 1.500q5-2 9 1.500 3 3.500 1 8-2.500 4-7.500 3.500-4.500-1-5-6 0-4.500 2.500-7z" fill="#58c838"/><path d="M4 8l3 3 5-6" stroke="#fff" stroke-width="2.200" fill="none"/></svg>
<svg style="left:763px;top:744px" width="14" height="16"><path d="M4 0v3M2.500 3.500h8v7h-8zM1 12h11v3.500h-11zM6.500 10.500v1.500" stroke="#28a828" stroke-width="1.500" fill="none"/><circle cx="6.500" cy="7" r="1.500" fill="none" stroke="#28a828" stroke-width="1.200"/></svg>
<svg style="left:782px;top:746px" width="12" height="12"><rect width="12" height="12" fill="#043c04"/><path d="M2 0v12M4 0v12M6 0v12M8 0v12M10 0v12M0 2h12M0 4h12M0 6h12M0 8h12M0 10h12" stroke="#22a822" stroke-width=".7"/></svg>
<svg style="left:799px;top:745px" width="16" height="14"><ellipse cx="6.500" cy="7" rx="6" ry="5.500" fill="#c8c8c8" stroke="#909090"/><path d="M8 2l5 5-5 5" stroke="#289848" stroke-width="2.200" fill="none"/><path d="M5 4l-3 3 3 3" stroke="#f0f0f0" stroke-width="1.500" fill="none"/></svg>
<svg style="left:815px;top:744px" width="16" height="16"><rect x="6" y=".5" width="8.500" height="7" fill="#58a8f0" stroke="#2858b0"/><rect x=".5" y="5.500" width="8.500" height="7" fill="#282860" stroke="#181840"/><path d="M3 14.500h5M9 9.500h4" stroke="#8890b0" stroke-width="1.500"/></svg>
<svg style="left:834px;top:744px" width="16" height="16"><rect x="6" y=".5" width="8.500" height="7" fill="#78c0f8" stroke="#3868c0"/><rect x=".5" y="5.500" width="8.500" height="7" fill="#58a8f0" stroke="#2858b0"/><path d="M3 14.500h5M9 9.500h4" stroke="#8890b0" stroke-width="1.500"/></svg>
<svg style="left:856px;top:744px" width="12" height="15"><rect x=".5" y=".5" width="10.500" height="14" fill="#e8d028" stroke="#988808"/><rect x="2.500" y="3" width="6.500" height="3" fill="#fff8c0" stroke="#988808" stroke-width=".6"/><rect x="2.500" y="8" width="6.500" height="3" fill="#b8a010"/></svg>
<svg style="left:871px;top:744px" width="17" height="17"><circle cx="8" cy="8" r="8" fill="#1848a8"/><circle cx="7" cy="6" r="4.500" fill="#3870d0" opacity=".6"/><text x="3.500" y="13" font-family="Liberation Serif,serif" font-size="14" font-weight="bold" fill="#fff">a</text></svg>
<svg style="left:888px;top:744px" width="17" height="17"><circle cx="8" cy="8" r="6.800" fill="#fff" stroke="#1020c0" stroke-width="2.400"/><path d="M5.500 4.500h3.500l2 2v5h-5.500z" fill="#e8e8f0" stroke="#404050"/></svg>
<svg style="left:906px;top:745px" width="16" height="14"><path d="M0 7q4-6 9-4v8q-5 1-9-4z" fill="#d8d8d8" stroke="#808080" stroke-width=".6"/><rect x="5" y="1" width="11" height="12" fill="#78b818"/><path d="M3 7q3-3.500 6-2.500v5q-3 .5-6-2.500z" fill="none" stroke="#fff" stroke-width="1.200"/></svg>
<svg style="left:924px;top:743px" width="17" height="18"><path d="M6 7l10 10" stroke="#383838" stroke-width="2.500"/><path d="M5 0l1.500 3.500 4-.5-2.500 3 2 3.500-4-1-2.500 3-.5-4-3.500-1.500 3.500-1.500z" fill="#f8d028" stroke="#e06010" stroke-width=".8"/></svg>
<svg style="left:942px;top:744px" width="16" height="16"><rect width="16" height="16" fill="#0818e8"/><path d="M4.500 3l8 5-8 5z" fill="#fff"/></svg>
<svg style="left:960px;top:744px" width="17" height="16"><ellipse cx="6.500" cy="7" rx="5.500" ry="6.500" fill="#a8a8a8" stroke="#686868"/><ellipse cx="6" cy="7" rx="2.500" ry="3.500" fill="#686868"/><path d="M12.500 5q2 3-1 7M14.500 6q1.500 3.500-2 7.500" stroke="#9898c0" fill="none"/></svg>
<!--TASKBAR-->
</div></body></html>
